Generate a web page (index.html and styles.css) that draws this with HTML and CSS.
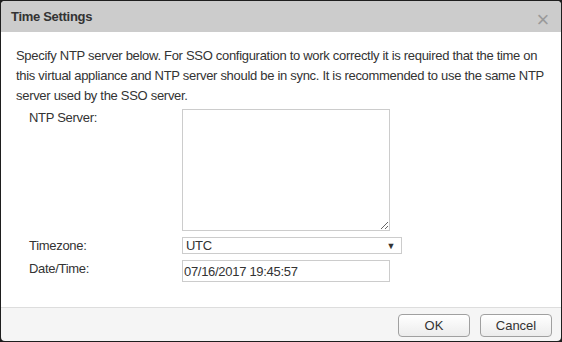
FILE: index.html
```html
<!DOCTYPE html>
<html lang="en">
<head>
    <meta charset="UTF-8">
    <title>Time Settings</title>
    <link rel="stylesheet" href="styles.css">
</head>
<body>
    <div class="dialog">
        <div class="dialog-header">
            <h1>Time Settings</h1>
            <span class="close">&times;</span>
        </div>
        <div class="dialog-body">
            <p>Specify NTP server below. For SSO configuration to work correctly it is required that the time on this virtual appliance and NTP server should be in sync. It is recommended to use the same NTP server used by the SSO server.</p>
            <div class="form">
                <label>NTP Server:</label>
                <textarea class="ntp"></textarea>
                <label>Timezone:</label>
                <div class="select">
                    <span>UTC</span>
                    <span class="arrow">&#9660;</span>
                </div>
                <label>Date/Time:</label>
                <input class="datetime" type="text" value="07/16/2017 19:45:57">
            </div>
        </div>
        <div class="dialog-footer">
            <button>OK</button>
            <button>Cancel</button>
        </div>
    </div>
</body>
</html>
```
FILE: styles.css
```css
html, body {
    margin: 0;
    height: 100%;
}
body {
    background-color: #1e1e1e;
    font-family: Arial, "Liberation Sans", sans-serif;
    font-size: 13px;
    letter-spacing: -0.3px;
    color: #333;
    padding: 1px;
    box-sizing: border-box;
}
.dialog {
    width: 560px;
    height: 340px;
    background-color: #f5f5f5;
    border-radius: 4px;
    overflow: hidden;
    display: flex;
    flex-direction: column;
}
.dialog-header {
    background-color: #cccccc;
    height: 31px;
    display: flex;
    align-items: center;
    justify-content: space-between;
    padding: 0 12px 0 10px;
    flex-shrink: 0;
}
.dialog-header h1 {
    margin: 0;
    font-size: 13px;
    font-weight: bold;
    color: #333;
}
.close {
    color: #9a9a9a;
    font-size: 22px;
    margin-top: 6px;
    line-height: 1;
}
.dialog-body {
    background-color: white;
    padding: 14px 15px 0 15px;
    height: 276px;
    box-sizing: border-box;
    border-bottom: 1px solid #dddddd;
    flex-shrink: 0;
}
.dialog-body p {
    margin: 0 0 3px 0;
    line-height: 20px;
}
.form {
    display: grid;
    grid-template-columns: 153px auto;
    row-gap: 6px;
    padding-left: 13px;
    justify-items: start;
}
label {
    line-height: 15px;
    margin-top: 1px;
}
textarea, input, .select {
    font-family: Arial, "Liberation Sans", sans-serif;
    font-size: 13px;
    letter-spacing: -0.3px;
    color: #333;
    border: 1px solid #ccc;
    box-sizing: border-box;
    margin: 0;
}
.ntp {
    width: 208px;
    height: 122px;
    resize: both;
}
.select {
    width: 220px;
    height: 17px;
    display: flex;
    align-items: center;
    justify-content: space-between;
    padding: 0 6px 0 3px;
}
.arrow {
    font-size: 9px;
    color: #333;
}
.datetime {
    width: 208px;
    height: 22px;
    padding: 0 0 0 1px;
}
.dialog-footer {
    display: flex;
    justify-content: flex-end;
    gap: 10px;
    padding: 6px 9px 0 0;
}
button {
    width: 72px;
    height: 23px;
    font-family: Arial, "Liberation Sans", sans-serif;
    font-size: 13px;
    color: #333;
    background: linear-gradient(to bottom, #ffffff, #ececec);
    border: 1px solid #a0a0a0;
    border-radius: 4px;
}
```
